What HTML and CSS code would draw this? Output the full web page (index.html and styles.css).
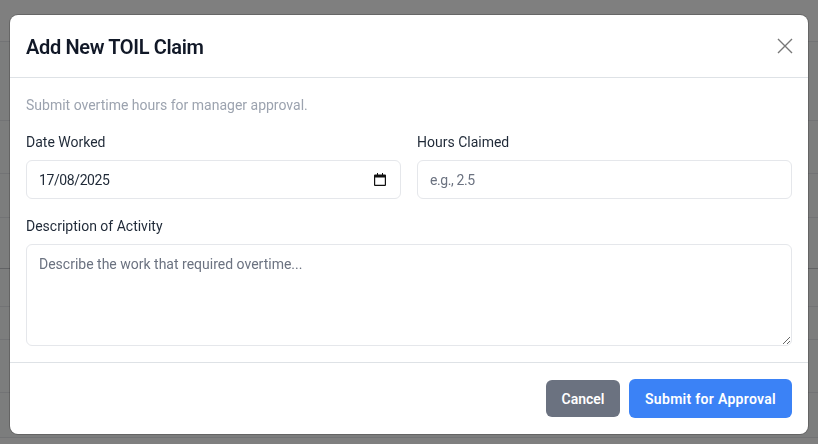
FILE: index.html
```html
<!DOCTYPE html>
<html lang="en-GB">
<head>
<meta charset="utf-8">
<title>Add New TOIL Claim</title>
<link rel="stylesheet" href="styles.css">
</head>
<body>
<div class="backdrop">
  <div class="row row-a"></div>
  <div class="row row-b"></div>
  <div class="row row-c"></div>
  <div class="row row-d"></div>
  <div class="row row-e"></div>
  <div class="row row-f"></div>
  <div class="row row-g"></div>
  <div class="row row-h"></div>
  <div class="row row-i"></div>
</div>
<div class="overlay">
  <form class="modal">
    <header class="modal-header">
      <h2 class="modal-title">Add New TOIL Claim</h2>
      <button type="button" class="close" aria-label="Close">
        <svg viewBox="0 0 16 16" width="16" height="16" aria-hidden="true"><path d="M1 1 15 15M15 1 1 15"/></svg>
      </button>
    </header>
    <div class="modal-body">
      <p class="hint">Submit overtime hours for manager approval.</p>
      <div class="grid">
        <div class="field">
          <label class="label" for="d">Date Worked</label>
          <div class="date-wrap">
            <input class="control control-tight" id="d" type="text" value="17/08/2025">
            <svg class="cal" viewBox="0 0 12 13" width="12" height="13" aria-hidden="true"><path fill-rule="evenodd" d="M3 0h1v1.500h4V0h1v1.500h2a1 1 0 0 1 1 1V12a1 1 0 0 1-1 1H1a1 1 0 0 1-1-1V2.500a1 1 0 0 1 1-1h2zM1.200 4.500v7.300h9.600V4.500z"/></svg>
          </div>
        </div>
        <div class="field">
          <label class="label" for="h">Hours Claimed</label>
          <input class="control control-tight" id="h" type="text" placeholder="e.g., 2.5">
        </div>
      </div>
      <div class="field">
        <label class="label" for="a">Description of Activity</label>
        <textarea class="control area" id="a" placeholder="Describe the work that required overtime..."></textarea>
      </div>
    </div>
    <footer class="modal-footer">
      <button type="button" class="btn btn-grey">Cancel</button>
      <button type="button" class="btn btn-blue">Submit for Approval</button>
    </footer>
  </form>
</div>
</body>
</html>
```
FILE: styles.css
```css
* { box-sizing: border-box; }
html, body { margin: 0; height: 100%; }
body { font-family: Roboto, "Liberation Sans", sans-serif; background: #fff; overflow: hidden; }
.backdrop { display: flex; flex-direction: column; height: 444px; }
.row { border-bottom: 1px solid #e5e7eb; background: #f9fafb; }
.row-a { height: 42px; background: #fff; }
.row-b { height: 79px; }
.row-c { height: 53px; }
.row-d { height: 44px; }
.row-e { height: 51px; border-bottom-color: #c4c6ca; }
.row-f { height: 38px; }
.row-g { height: 33px; }
.row-h { height: 53px; }
.row-i { height: 45px; }
.overlay { position: fixed; inset: 0; background: rgba(0,0,0,.5); display: flex; justify-content: center; align-items: flex-start; padding-top: 15px; }
.modal { width: 798px; height: 419px; background: #fff; border-radius: 8px; display: flex; flex-direction: column; box-shadow: 0 0 0 1px rgba(0,0,0,.2); }
.modal-header { height: 63px; display: flex; align-items: center; justify-content: space-between; padding: 2px 16px 0; border-bottom: 1px solid #dee2e6; }
.modal-title { margin: 0; font-size: 20px; font-weight: 600; line-height: 30px; letter-spacing: -.35px; color: #111827; }
.close { padding: 0; border: 0; background: none; width: 16px; height: 16px; display: block; margin: -3px -1px 0 0; }
.close svg { display: block; fill: none; stroke: #777; stroke-width: 1.4; }
.modal-body { flex: 1; padding: 17px 16px 16px; display: flex; flex-direction: column; }
.hint { margin: 0 0 15px; font-size: 14px; line-height: 21px; color: #9ca3af; }
.grid { display: grid; grid-template-columns: 1fr 1fr; gap: 16px; margin-bottom: 16px; }
.field { display: flex; flex-direction: column; }
.label { font-size: 14px; line-height: 21px; color: #1f2937; padding-top: 1px; margin-bottom: 7px; }
.date-wrap { position: relative; }
.control { font: 400 14px/21px Roboto, "Liberation Sans", sans-serif; color: #1f2937; background: #fff; border: 1px solid #e5e7eb; border-radius: 6px; padding: 8px 12px; height: 39px; width: 100%; outline: 0; display: block; }
.control-tight { letter-spacing: -.4px; }
.control::placeholder { color: #6b7280; opacity: 1; }
.cal { position: absolute; right: 15px; top: 13px; fill: #111; }
.area { height: 102px; resize: vertical; padding-top: 9px; }
.modal-footer { height: 72px; display: flex; justify-content: flex-end; align-items: center; gap: 9px; padding: 0 16px; border-top: 1px solid #dee2e6; }
.btn { font: 600 14px/21px Roboto, "Liberation Sans", sans-serif; color: #fff; border: 0; border-radius: 6px; padding: 1px 16px 0; }
.btn-grey { background: #6b7280; height: 37px; padding-inline: 15.5px; }
.btn-blue { background: #3b82f6; height: 39px; letter-spacing: .3px; }
```
